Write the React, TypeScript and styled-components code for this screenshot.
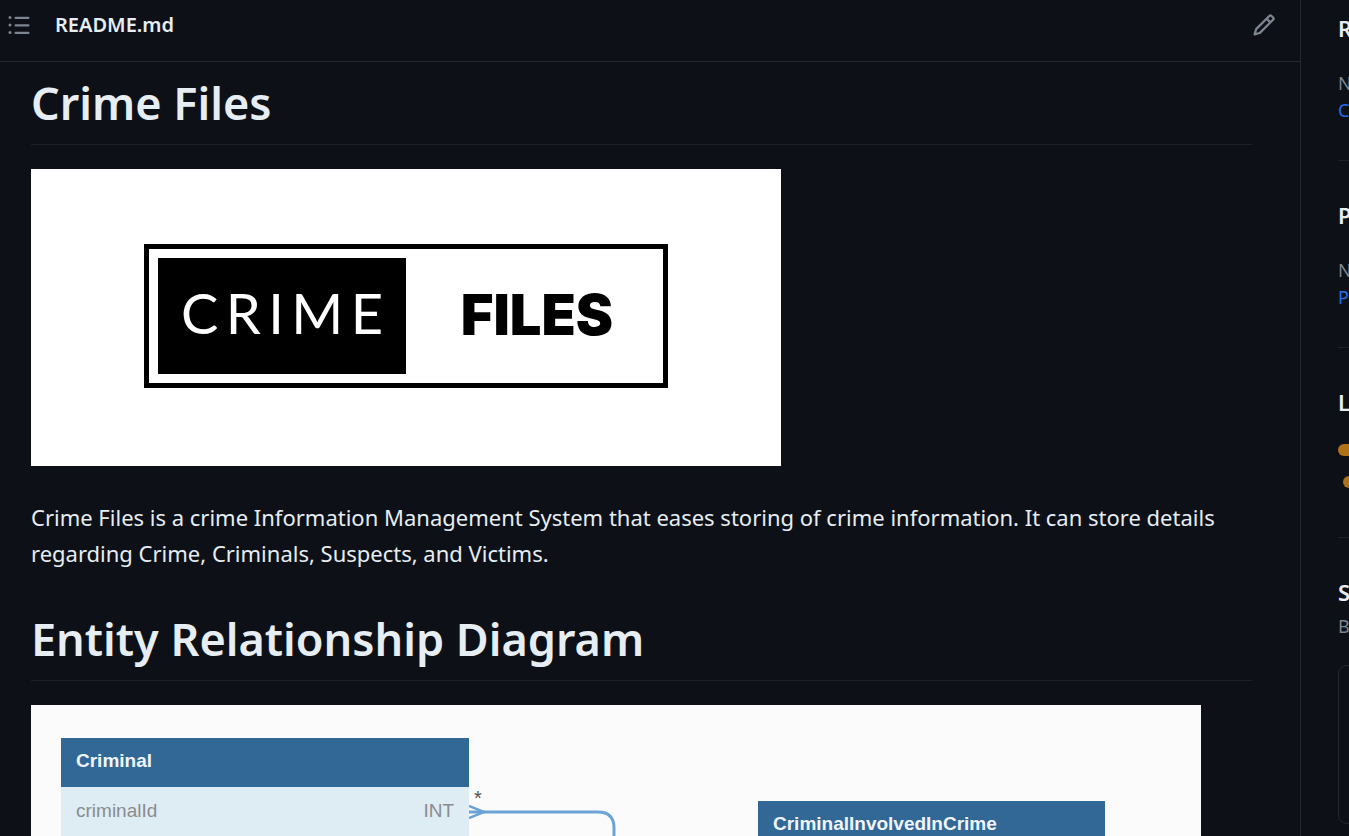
import React from "react";
import styled, { createGlobalStyle } from "styled-components";

const GlobalStyle = createGlobalStyle`
  * { box-sizing: border-box; }
  body {
    margin: 0;
    background: #0d1117;
    color: #e6edf3;
    font-family: "Noto Sans", "Open Sans", sans-serif;
  }
  h1, h2, p { margin: 0; }
`;

const Page = styled.div`
  display: flex;
  height: 100vh;
  overflow: hidden;
`;

const Readme = styled.main`
  flex: 1;
  min-width: 0;
  border-right: 1px solid #24292f;
`;

const Toolbar = styled.header`
  display: flex;
  align-items: center;
  gap: 24px;
  height: 62px;
  padding: 0 24px 12px 7px;
  border-bottom: 1px solid #24292f;
`;

const IconButton = styled.button`
  display: flex;
  padding: 0;
  border: 0;
  background: none;
  color: #7d8590;
`;

const FileName = styled.h2`
  flex: 1;
  font-size: 20px;
  line-height: 28px;
  font-weight: 600;
`;

const Article = styled.article`
  padding: 12px 48px 0 31px;
`;

const Title = styled.h1`
  padding-bottom: 12px;
  margin-bottom: 24px;
  border-bottom: 1px solid #1c2128;
  font-size: 45px;
  line-height: 58px;
  font-weight: 600;
`;

const Banner = styled.div`
  display: flex;
  align-items: center;
  width: 750px;
  max-width: 100%;
  height: 297px;
  padding: 0 113px 4px;
  background: #fff;
`;

const LogoFrame = styled.div`
  display: flex;
  flex: 1;
  height: 144px;
  padding: 9px;
  border: 5px solid #000;
  font-family: Inter, sans-serif;
  font-size: 56px;
  line-height: 64px;
`;

const LogoCrime = styled.span`
  display: flex;
  align-items: center;
  justify-content: space-between;
  width: 248px;
  padding: 0 23px 6px;
  background: #000;
  color: #fff;
  font-family: Lato, sans-serif;
`;

const LogoFiles = styled.span`
  display: flex;
  flex: 1;
  align-items: center;
  justify-content: center;
  padding: 0 0 2px 14px;
  color: #000;
  font-weight: 900;
`;

const Paragraph = styled.p`
  margin: 33px 0 39px;
  font-size: 22px;
  line-height: 36px;
`;

const Diagram = styled.div`
  display: flex;
  align-items: flex-start;
  width: 1170px;
  max-width: 100%;
  height: 640px;
  padding: 33px 30px;
  background: #fbfbfb;
  font-family: "Liberation Sans", Arial, sans-serif;
  font-size: 19px;
  line-height: 24px;
`;

const Entity = styled.table<{ $width: number; $top: number }>`
  width: ${(p) => p.$width}px;
  margin-top: ${(p) => p.$top}px;
  border-collapse: collapse;
  background: #deecf3;
  color: #8a8c8e;

  th {
    height: 49px;
    padding: 0 15px 4px;
    background: #326896;
    color: #f0f5f9;
    text-align: left;
    font-weight: 700;
  }
  td {
    height: 49px;
    padding: 0 15px 2px;
  }
  td + td { text-align: right; }
`;

const Link = styled.svg`
  flex: none;
  margin-top: 49px;
`;

const Sidebar = styled.aside`
  flex: 0 0 48px;
  min-width: 0;
  padding: 13px 0 0 37px;
  overflow: hidden;
  white-space: nowrap;
`;

const Section = styled.section<{ $height: number }>`
  height: ${(p) => p.$height}px;
  margin-bottom: 39px;
  border-bottom: 1px solid #1c2128;
`;

const SideTitle = styled.h2`
  margin-bottom: 26px;
  font-size: 22px;
  line-height: 30px;
  font-weight: 600;
`;

const SideText = styled.p`
  color: #7d8590;
  font-size: 18px;
  line-height: 28px;
`;

const SideLink = styled.a`
  display: block;
  color: #1f6feb;
  font-size: 18px;
  line-height: 26px;
  text-decoration: none;
`;

const LanguageBar = styled.div`
  width: 400px;
  height: 12px;
  margin: 27px 0 20px;
  border-radius: 6px;
  background: #b07219;
`;

const LanguageDot = styled.div`
  width: 12px;
  height: 12px;
  margin-left: 5px;
  border-radius: 50%;
  background: #b07219;
`;

const Suggested = styled.section`
  h2 { margin-bottom: 5px; }
`;

const WorkflowCard = styled.div`
  width: 400px;
  height: 159px;
  margin: 25px 0 11px;
  border: 1px solid #24292f;
  border-radius: 9px;
`;

export default function App() {
  return (
    <>
      <GlobalStyle />
      <Page>
        <Readme>
          <Toolbar>
            <IconButton aria-label="Outline">
              <svg width="24" height="24" viewBox="0 0 16 16" fill="currentColor">
                <path d="M5.75 2.5h8.5a.75.75 0 0 1 0 1.5h-8.5a.75.75 0 0 1 0-1.5Zm0 5h8.5a.75.75 0 0 1 0 1.5h-8.5a.75.75 0 0 1 0-1.5Zm0 5h8.5a.75.75 0 0 1 0 1.5h-8.5a.75.75 0 0 1 0-1.5ZM2 14a1 1 0 1 1 0-2 1 1 0 0 1 0 2Zm1-6a1 1 0 1 1-2 0 1 1 0 0 1 2 0ZM2 4a1 1 0 1 1 0-2 1 1 0 0 1 0 2Z" />
              </svg>
            </IconButton>
            <FileName>README.md</FileName>
            <IconButton aria-label="Edit file">
              <svg width="24" height="24" viewBox="0 0 16 16" fill="currentColor">
                <path d="M11.013 1.427a1.75 1.75 0 0 1 2.474 0l1.086 1.086a1.75 1.75 0 0 1 0 2.474l-8.61 8.61c-.21.21-.47.364-.756.445l-3.251.93a.75.75 0 0 1-.927-.928l.929-3.25c.081-.286.235-.547.445-.758l8.61-8.61Zm.176 4.823L9.75 4.81l-6.286 6.287a.253.253 0 0 0-.064.108l-.558 1.953 1.953-.558a.253.253 0 0 0 .108-.064Zm1.238-3.763a.25.25 0 0 0-.354 0L10.811 3.75l1.439 1.44 1.263-1.263a.25.25 0 0 0 0-.354Z" />
              </svg>
            </IconButton>
          </Toolbar>
          <Article>
            <Title>Crime Files</Title>
            <Banner>
              <LogoFrame>
                <LogoCrime>
                  <span>C</span>
                  <span>R</span>
                  <span>I</span>
                  <span>M</span>
                  <span>E</span>
                </LogoCrime>
                <LogoFiles>FILES</LogoFiles>
              </LogoFrame>
            </Banner>
            <Paragraph>
              Crime Files is a crime Information Management System that eases storing of crime information. It can store details
              regarding Crime, Criminals, Suspects, and Victims.
            </Paragraph>
            <Title>Entity Relationship Diagram</Title>
            <Diagram>
              <Entity $width={408} $top={0}>
                <thead>
                  <tr>
                    <th colSpan={2}>Criminal</th>
                  </tr>
                </thead>
                <tbody>
                  <tr>
                    <td>criminalId</td>
                    <td>INT</td>
                  </tr>
                </tbody>
              </Entity>
              <Link width="289" height="60" viewBox="0 0 289 60" fill="none" stroke="#6ba3d6" strokeWidth="3">
                <path d="M0 25H129Q145 25 145 41V60" />
                <path d="M0 19L15 25L0 31" strokeWidth="2.5" />
                <text x="5" y="18" fill="#555" stroke="none" fontSize="20">*</text>
              </Link>
              <Entity $width={347} $top={63}>
                <thead>
                  <tr>
                    <th>CriminalInvolvedInCrime</th>
                  </tr>
                </thead>
              </Entity>
            </Diagram>
          </Article>
        </Readme>
        <Sidebar>
          <Section $height={148}>
            <SideTitle>Releases</SideTitle>
            <SideText>No releases published</SideText>
            <SideLink href="#releases">Create a new release</SideLink>
          </Section>
          <Section $height={148}>
            <SideTitle>Packages</SideTitle>
            <SideText>No packages published</SideText>
            <SideLink href="#packages">Publish your first package</SideLink>
          </Section>
          <Section $height={151}>
            <SideTitle>Languages</SideTitle>
            <LanguageBar />
            <LanguageDot />
          </Section>
          <Suggested>
            <SideTitle>Suggested Workflows</SideTitle>
            <SideText>Based on your tech stack</SideText>
            <WorkflowCard />
            <WorkflowCard />
          </Suggested>
        </Sidebar>
      </Page>
    </>
  );
}
